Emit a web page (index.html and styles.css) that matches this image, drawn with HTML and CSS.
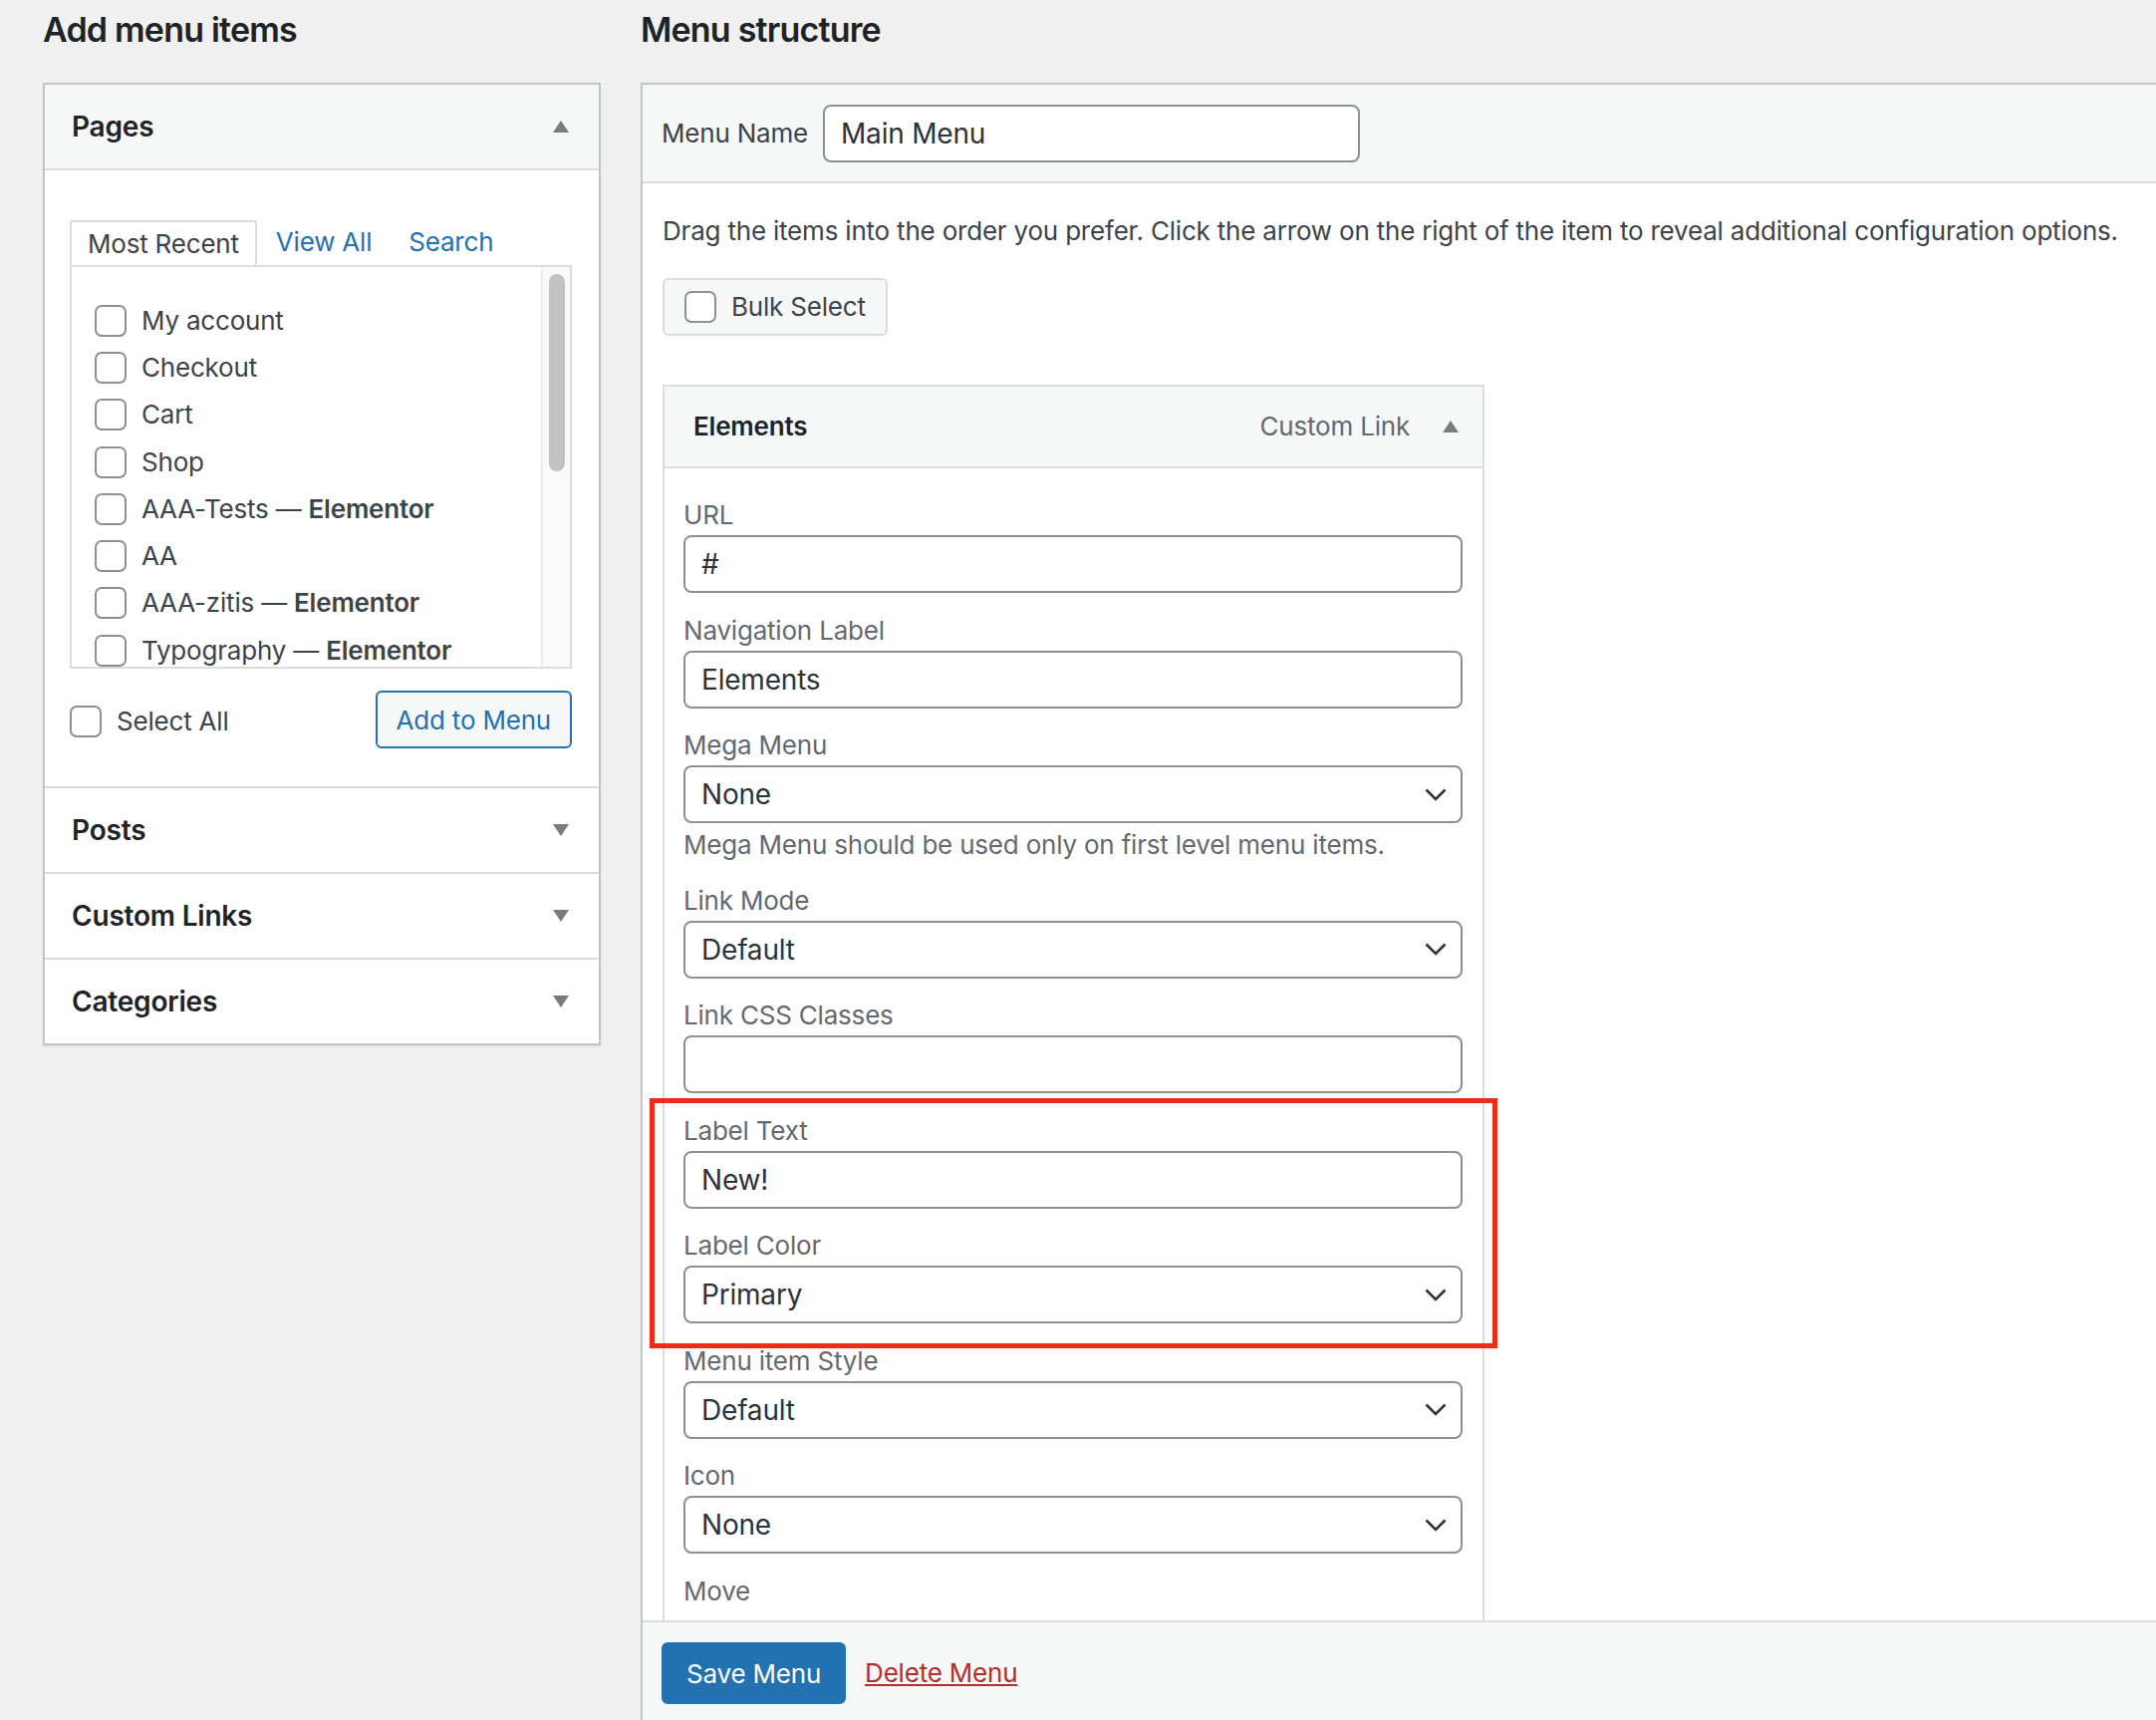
FILE: index.html
```html
<!DOCTYPE html>
<html lang="en">
<head>
    <meta charset="UTF-8">
    <meta name="viewport" content="width=device-width, initial-scale=1.0">
    <title>Menus</title>
    <link rel="stylesheet" href="styles.css">
</head>
<body>
    <div class="page">
        <div class="col col-left">
            <h2 class="col-title">Add menu items</h2>
            <div class="accordion">
                <div class="acc-section open">
                    <div class="acc-title">
                        <h3>Pages</h3>
                        <span class="arrow arrow-up"></span>
                    </div>
                    <div class="acc-content">
                        <ul class="tabs">
                            <li class="tab active">Most Recent</li>
                            <li class="tab"><a href="#">View All</a></li>
                            <li class="tab"><a href="#">Search</a></li>
                        </ul>
                        <div class="tabs-panel">
                            <ul class="checklist">
                                <li><input type="checkbox"><span>My account</span></li>
                                <li><input type="checkbox"><span>Checkout</span></li>
                                <li><input type="checkbox"><span>Cart</span></li>
                                <li><input type="checkbox"><span>Shop</span></li>
                                <li><input type="checkbox"><span>AAA-Tests — <b>Elementor</b></span></li>
                                <li><input type="checkbox"><span>AA</span></li>
                                <li><input type="checkbox"><span>AAA-zitis — <b>Elementor</b></span></li>
                                <li><input type="checkbox"><span>Typography — <b>Elementor</b></span></li>
                            </ul>
                            <div class="scrollbar"><div class="thumb"></div></div>
                        </div>
                        <div class="button-controls">
                            <label class="select-all"><input type="checkbox"><span>Select All</span></label>
                            <button class="button">Add to Menu</button>
                        </div>
                    </div>
                </div>
                <div class="acc-section">
                    <div class="acc-title">
                        <h3>Posts</h3>
                        <span class="arrow arrow-down"></span>
                    </div>
                </div>
                <div class="acc-section">
                    <div class="acc-title">
                        <h3>Custom Links</h3>
                        <span class="arrow arrow-down"></span>
                    </div>
                </div>
                <div class="acc-section">
                    <div class="acc-title">
                        <h3>Categories</h3>
                        <span class="arrow arrow-down"></span>
                    </div>
                </div>
            </div>
        </div>

        <div class="col col-right">
            <h2 class="col-title">Menu structure</h2>
            <div class="menu-edit">
                <div class="menu-header">
                    <label class="menu-name-label">Menu Name</label>
                    <input class="menu-name" type="text" value="Main Menu">
                </div>
                <div class="menu-body">
                    <p class="drag-instructions">Drag the items into the order you prefer. Click the arrow on the right of the item to reveal additional configuration options.</p>
                    <label class="bulk-select"><input type="checkbox"><span>Bulk Select</span></label>

                    <div class="menu-item">
                        <div class="item-handle">
                            <span class="item-title">Elements</span>
                            <span class="item-controls">
                                <span class="item-type">Custom Link</span>
                                <span class="arrow arrow-up"></span>
                            </span>
                        </div>
                        <div class="item-settings">
                            <div class="field">
                                <label>URL</label>
                                <input type="text" value="#">
                            </div>
                            <div class="field">
                                <label>Navigation Label</label>
                                <input type="text" value="Elements">
                            </div>
                            <div class="field">
                                <label>Mega Menu</label>
                                <div class="select"><span>None</span><svg width="22" height="13" viewBox="0 0 22 13"><polyline points="1.5,1.5 11,11 20.5,1.5"/></svg></div>
                                <p class="description">Mega Menu should be used only on first level menu items.</p>
                            </div>
                            <div class="field">
                                <label>Link Mode</label>
                                <div class="select"><span>Default</span><svg width="22" height="13" viewBox="0 0 22 13"><polyline points="1.5,1.5 11,11 20.5,1.5"/></svg></div>
                            </div>
                            <div class="field">
                                <label>Link CSS Classes</label>
                                <input type="text" value="">
                            </div>
                            <div class="highlight">
                                <div class="field">
                                    <label>Label Text</label>
                                    <input type="text" value="New!">
                                </div>
                                <div class="field">
                                    <label>Label Color</label>
                                    <div class="select"><span>Primary</span><svg width="22" height="13" viewBox="0 0 22 13"><polyline points="1.5,1.5 11,11 20.5,1.5"/></svg></div>
                                </div>
                            </div>
                            <div class="field">
                                <label>Menu item Style</label>
                                <div class="select"><span>Default</span><svg width="22" height="13" viewBox="0 0 22 13"><polyline points="1.5,1.5 11,11 20.5,1.5"/></svg></div>
                            </div>
                            <div class="field">
                                <label>Icon</label>
                                <div class="select"><span>None</span><svg width="22" height="13" viewBox="0 0 22 13"><polyline points="1.5,1.5 11,11 20.5,1.5"/></svg></div>
                            </div>
                            <div class="field">
                                <label>Move</label>
                            </div>
                        </div>
                    </div>
                </div>
                <div class="menu-footer">
                    <button class="button button-primary">Save Menu</button>
                    <a class="delete-menu" href="#">Delete Menu</a>
                </div>
            </div>
        </div>
    </div>
</body>
</html>
```

FILE: styles.css
```css
html, body {
    overflow: hidden;
}
body {
    margin: 0;
    background-color: #f0f0f1;
    font-family: Inter, 'Noto Sans', sans-serif;
    font-size: 26px;
    line-height: 36px;
    letter-spacing: -0.2px;
    color: #3c434a;
}
.page {
    display: flex;
    gap: 40px;
    padding: 8px 0 0 43px;
}
.col-left {
    width: 560px;
    flex-shrink: 0;
}
.col-right {
    flex: 1;
    margin-right: -6px;
}
.col-title {
    margin: 0 0 31px;
    font-size: 34px;
    line-height: 44px;
    font-weight: 600;
    letter-spacing: -0.8px;
    color: #1d2327;
}

/* left column: accordion */
.accordion {
    background-color: white;
    border: 2px solid #c3c4c7;
    box-shadow: 0 2px 2px rgba(0,0,0,0.06);
}
.acc-section + .acc-section {
    border-top: 2px solid #dcdcde;
}
.acc-title {
    display: flex;
    align-items: center;
    justify-content: space-between;
    height: 84px;
    padding: 0 30px 0 27px;
}
.acc-section.open .acc-title {
    background-color: #f6f7f7;
    border-bottom: 2px solid #dcdcde;
}
.acc-title h3 {
    margin: 0;
    font-size: 28px;
    font-weight: 600;
    color: #1d2327;
}
.arrow {
    width: 0;
    height: 0;
    border-left: 8px solid transparent;
    border-right: 8px solid transparent;
}
.arrow-up {
    border-bottom: 12px solid #787c82;
}
.arrow-down {
    border-top: 12px solid #787c82;
}
.acc-content {
    padding: 50px 27px 38px 25px;
}
.tabs {
    display: flex;
    margin: 0;
    padding: 0;
    list-style: none;
}
.tab {
    height: 45px;
    line-height: 43px;
    padding: 0 18px;
    margin-right: 1px;
}
.tab.active {
    padding: 0 16px;
    border: 2px solid #dcdcde;
    border-bottom: none;
    height: 43px;
    color: #3c434a;
}
.tab a {
    color: #2271b1;
    text-decoration: none;
}
.tabs-panel {
    display: flex;
    height: 401px;
    border: 2px solid #dcdcde;
}
.checklist {
    flex: 1;
    margin: 0;
    padding: 30px 0 0 23px;
    list-style: none;
    overflow: hidden;
}
.checklist li {
    display: flex;
    align-items: center;
    gap: 15px;
    height: 47.3px;
}
.checklist b {
    font-weight: 600;
}
input[type="checkbox"] {
    appearance: none;
    flex-shrink: 0;
    width: 32px;
    height: 32px;
    margin: 0;
    background-color: white;
    border: 2px solid #8c8f94;
    border-radius: 7px;
}
.scrollbar {
    width: 27px;
    background-color: #fafafa;
    border-left: 2px solid #ececec;
}
.thumb {
    width: 16px;
    height: 198px;
    margin: 7px 0 0 6px;
    border-radius: 8px;
    background-color: #c2c2c2;
}
.button-controls {
    display: flex;
    align-items: center;
    justify-content: space-between;
    margin-top: 22px;
}
.select-all {
    display: flex;
    align-items: center;
    gap: 15px;
    margin-top: 4px;
}
.button {
    height: 58px;
    padding: 0 19px;
    font-family: inherit;
    font-size: 26px;
    letter-spacing: -0.2px;
    color: #2271b1;
    background-color: #f6f7f7;
    border: 2px solid #2271b1;
    border-radius: 6px;
    cursor: pointer;
}
.button-primary {
    height: 62px;
    padding: 0 23px;
    color: white;
    background-color: #2271b1;
}

/* right column: menu editor */
.menu-edit {
    background-color: white;
    border: 2px solid #c3c4c7;
}
.menu-header {
    display: flex;
    align-items: center;
    gap: 15px;
    height: 97px;
    padding-left: 19px;
    background-color: #f6f7f7;
    border-bottom: 2px solid #dcdcde;
}
input[type="text"] {
    box-sizing: border-box;
    height: 58px;
    padding: 0 16px;
    font-family: inherit;
    font-size: 28px;
    letter-spacing: -0.2px;
    color: #2c3338;
    background-color: white;
    border: 2px solid #8c8f94;
    border-radius: 8px;
}
.menu-name {
    width: 539px;
}
.menu-body {
    height: 1442px;
    padding-left: 20px;
    overflow: hidden;
}
.drag-instructions {
    margin: 30px 0 0;
}
.bulk-select {
    display: inline-flex;
    align-items: center;
    gap: 15px;
    margin-top: 29px;
    height: 54px;
    padding: 0 20px;
    background-color: #f6f7f7;
    border: 2px solid #dcdcde;
    border-radius: 6px;
}
.menu-item {
    width: 825px;
    margin-top: 49px;
}
.item-handle {
    display: flex;
    align-items: center;
    justify-content: space-between;
    height: 80px;
    padding: 0 24px 0 29px;
    background-color: #f6f7f7;
    border: 2px solid #dcdcde;
}
.item-title {
    font-weight: 600;
    color: #1d2327;
}
.item-controls {
    display: flex;
    align-items: center;
    gap: 33px;
}
.item-type {
    color: #646970;
}
.item-settings {
    display: flex;
    flex-direction: column;
    gap: 19.5px;
    padding: 29px 20px 80px 19px;
    border: 2px solid #dcdcde;
    border-top: none;
}
.field label {
    display: block;
    color: #646970;
}
.field input[type="text"] {
    display: block;
    width: 100%;
    margin-top: 2px;
}
.select {
    display: flex;
    align-items: center;
    justify-content: space-between;
    box-sizing: border-box;
    height: 58px;
    margin-top: 2px;
    padding: 0 14px 0 16px;
    font-size: 28px;
    color: #2c3338;
    border: 2px solid #8c8f94;
    border-radius: 8px;
}
.select svg polyline {
    fill: none;
    stroke: #2c3338;
    stroke-width: 2.6;
}
.description {
    margin: 4px 0 0;
    color: #646970;
}
.highlight {
    position: relative;
    display: flex;
    flex-direction: column;
    gap: 19.5px;
}
.highlight::after {
    content: "";
    position: absolute;
    top: -15px;
    left: -34px;
    right: -35px;
    bottom: -25px;
    border: 5px solid #ee2b17;
}
.menu-footer {
    display: flex;
    align-items: flex-start;
    gap: 19px;
    height: 200px;
    padding: 20px 0 0 19px;
    background-color: #f6f7f7;
    border-top: 2px solid #dcdcde;
}
.delete-menu {
    line-height: 62px;
    color: #b32d2e;
}
```
